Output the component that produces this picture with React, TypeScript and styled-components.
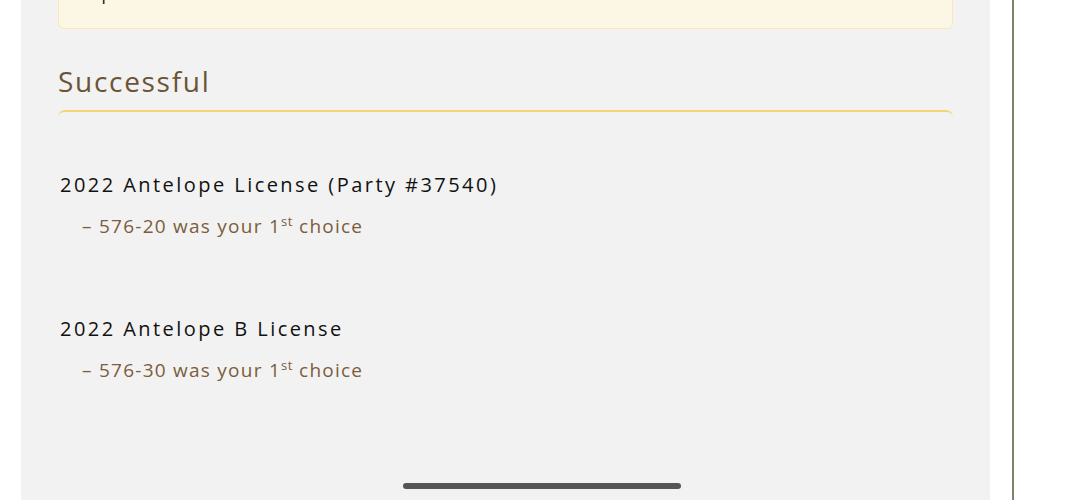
import React from "react";
import styled, { createGlobalStyle } from "styled-components";

const Global = createGlobalStyle`
  html, body { margin: 0; padding: 0; background: #ffffff; overflow: hidden; }
  body { font-family: "Open Sans", "Liberation Sans", sans-serif; }
`;

const Screen = styled.div`
  display: flex;
  flex-direction: row;
  align-items: stretch;
  height: 500px;
  overflow: hidden;
`;

const Panel = styled.main`
  margin-left: 21px;
  width: 969px;
  box-sizing: border-box;
  padding: 0 37px;
  background: #f2f2f2;
  display: flex;
  flex-direction: column;
`;

const Divider = styled.div`
  margin-left: 22px;
  width: 2px;
  background: #80836b;
`;

const Notice = styled.div`
  margin-top: -37px;
  padding: 18px 22px 22px;
  background: #fbf7e4;
  border: 1px solid #f6e8b8;
  border-radius: 6px;
  font-size: 17px;
  line-height: 24px;
  color: #111;
`;

const Heading = styled.h2`
  margin: 35px 0 0;
  font-size: 28px;
  line-height: 34px;
  font-weight: 400;
  letter-spacing: 1.7px;
  color: #6b5436;
`;

const Card = styled.section`
  margin-top: 12px;
  border-top: 2px solid #f4d574;
  border-radius: 7px;
  padding: 60px 2px 70px;
  display: flex;
  flex-direction: column;
  gap: 78px;
`;

const Entry = styled.div`
  display: flex;
  flex-direction: column;
  gap: 16px;
`;

const LicenseTitle = styled.div`
  font-size: 20px;
  line-height: 26px;
  letter-spacing: 2.45px;
  color: #111111;
`;

const Choice = styled.div`
  padding-left: 22px;
  font-size: 19px;
  line-height: 24px;
  letter-spacing: 1.25px;
  color: #7b5d3b;

  sup {
    font-size: 13px;
    line-height: 0;
    vertical-align: 7px;
    letter-spacing: 0.5px;
  }
`;

const HomeIndicator = styled.div`
  position: fixed;
  left: 403px;
  top: 483px;
  width: 278px;
  height: 6px;
  border-radius: 3px;
  background: #555555;
`;

const results = [
  { title: "2022 Antelope License (Party #37540)", hunt: "576-20" },
  { title: "2022 Antelope B License", hunt: "576-30" },
];

export default function App() {
  return (
    <>
      <Global />
      <Screen>
        <Panel>
          <Notice>Important information about the draw results.</Notice>
          <Heading>Successful</Heading>
          <Card>
            {results.map((r) => (
              <Entry key={r.title}>
                <LicenseTitle>{r.title}</LicenseTitle>
                <Choice>
                  – {r.hunt} was your 1<sup>st</sup> choice
                </Choice>
              </Entry>
            ))}
          </Card>
        </Panel>
        <Divider />
      </Screen>
      <HomeIndicator />
    </>
  );
}
